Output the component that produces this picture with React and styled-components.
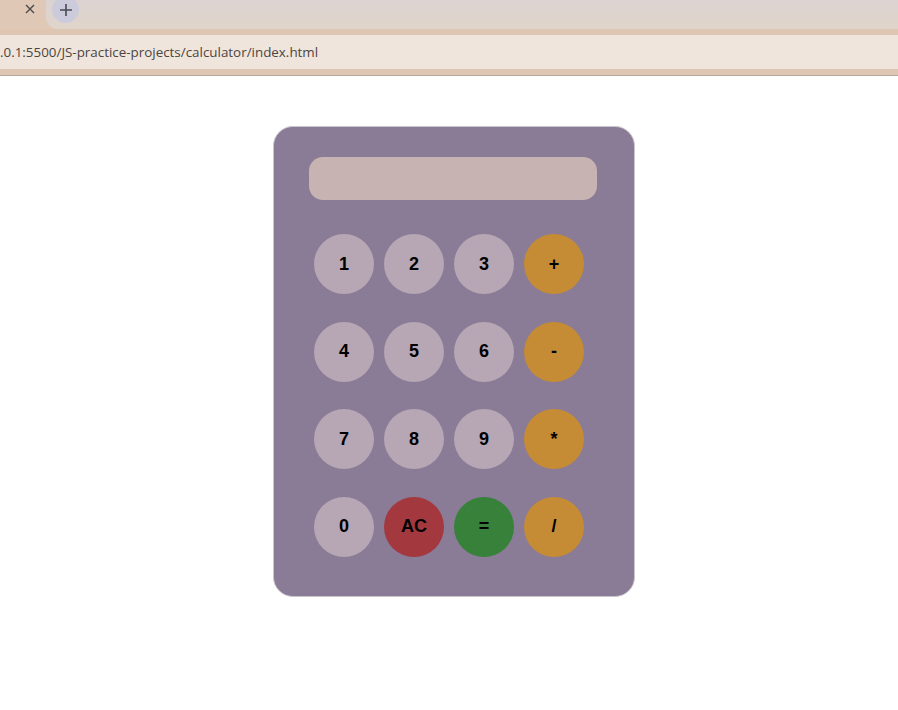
import React from 'react';
import styled, { createGlobalStyle } from 'styled-components';

const GlobalStyle = createGlobalStyle`
  html, body { margin: 0; padding: 0; background: #ffffff; }
  body { font-family: "Liberation Sans", Arial, sans-serif; }
`;

// --- browser chrome ---
const Chrome = styled.div` display: flex; flex-direction: column; `;
const TabStrip = styled.div` display: flex; height: 29px; overflow: hidden; background: #dfc8b5; `;
const ActiveTab = styled.div`
  width: 46px; display: flex; justify-content: flex-end; align-items: flex-start;
  padding: 2px 9px 0 0; box-sizing: border-box; color: #4e4a4a;
`;
const StripRest = styled.div`
  flex: 1; background: linear-gradient(#dbd3d1, #e0d5ca); border-bottom-left-radius: 12px;
  display: flex; align-items: flex-start; padding-left: 6px;
`;
const NewTab = styled.div`
  width: 27px; height: 27px; margin-top: -4px; border-radius: 50%; background: #cccbdc;
  display: flex; align-items: center; justify-content: center; color: #4a4a55;
`;
const Toolbar = styled.div` background: #dfc6b3; padding: 6px 0; border-bottom: 1px solid #b2a89f; `;
const AddressBar = styled.div`
  height: 34px; background: #f0e5dc; display: flex; align-items: center;
  font-family: "Open Sans", "Noto Sans", sans-serif; font-size: 13.4px; color: #4b4542; white-space: nowrap;
`;

// --- page ---
const Page = styled.main` padding: 50px 0 60px 273px; `;
const Calculator = styled.div`
  width: 362px; height: 471px; box-sizing: border-box; background: #8a7b96;
  border: 1px solid #c9c5cc; border-radius: 20px; padding: 30px 37px 0 35px;
`;
const Display = styled.input`
  display: block; width: 288px; height: 43px; box-sizing: border-box; border: none; outline: none;
  border-radius: 14px; background: #c7b3b2; padding: 0 14px; font-size: 22px;
`;
const Keys = styled.div`
  display: grid; grid-template-columns: repeat(4, 60px); column-gap: 10px; row-gap: 27.5px;
  margin-top: 34px; padding-left: 5px;
`;
const Key = styled.button`
  width: 60px; height: 60px; border-radius: 50%; border: none; padding: 0;
  background: ${p => p.bg}; color: #000;
  font-family: "Liberation Sans", Arial, sans-serif; font-weight: bold; font-size: 18px;
  cursor: pointer;
`;

const colors = {
  num: '#b7a6b4',
  op: '#c58c35',
  clear: '#a3393f',
  equal: '#37813b',
};

const keys = [
  ['1', 'num'], ['2', 'num'], ['3', 'num'], ['+', 'op'],
  ['4', 'num'], ['5', 'num'], ['6', 'num'], ['-', 'op'],
  ['7', 'num'], ['8', 'num'], ['9', 'num'], ['*', 'op'],
  ['0', 'num'], ['AC', 'clear'], ['=', 'equal'], ['/', 'op'],
];

const App = () => (
  <>
    <GlobalStyle />
    <Chrome>
      <TabStrip>
        <ActiveTab>
          <svg width="14" height="14" viewBox="0 0 14 14">
            <path d="M3 3l8 8M11 3l-8 8" stroke="currentColor" strokeWidth="1.4" />
          </svg>
        </ActiveTab>
        <StripRest>
          <NewTab>
            <svg width="14" height="14" viewBox="0 0 14 14">
              <path d="M7 1v12M1 7h12" stroke="currentColor" strokeWidth="1.6" />
            </svg>
          </NewTab>
        </StripRest>
      </TabStrip>
      <Toolbar>
        <AddressBar>.0.1:5500/JS-practice-projects/calculator/index.html</AddressBar>
      </Toolbar>
    </Chrome>
    <Page>
      <Calculator>
        <Display readOnly />
        <Keys>
          {keys.map(([label, kind]) => (
            <Key key={label} bg={colors[kind]}>{label}</Key>
          ))}
        </Keys>
      </Calculator>
    </Page>
  </>
);

export default App;
